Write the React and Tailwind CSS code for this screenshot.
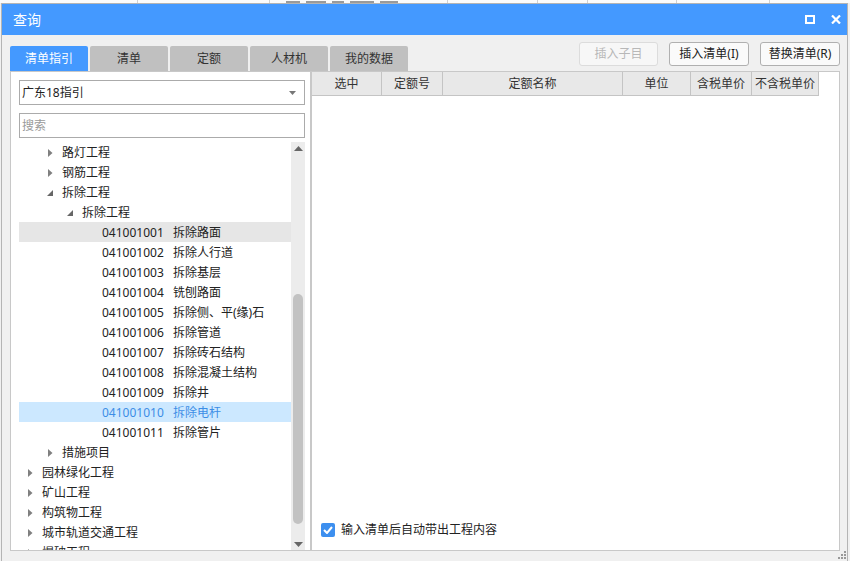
import React from "react";

const font = "font-['Noto_Sans','Noto_Sans_CJK_SC',sans-serif]";

const tabs = ["清单指引", "清单", "定额", "人材机", "我的数据"];

const columns = [
  { label: "选中", w: "w-[70px]" },
  { label: "定额号", w: "w-[61px]" },
  { label: "定额名称", w: "w-[180px]" },
  { label: "单位", w: "w-[68px]" },
  { label: "含税单价", w: "w-[61px]" },
  { label: "不含税单价", w: "w-[67px]" },
];

// level, state: "closed" | "open" | "leaf"
const rows = [
  { level: 1, state: "closed", text: "路灯工程" },
  { level: 1, state: "closed", text: "钢筋工程" },
  { level: 1, state: "open", text: "拆除工程" },
  { level: 2, state: "open", text: "拆除工程" },
  { level: 3, state: "leaf", code: "041001001", text: "拆除路面", hover: true },
  { level: 3, state: "leaf", code: "041001002", text: "拆除人行道" },
  { level: 3, state: "leaf", code: "041001003", text: "拆除基层" },
  { level: 3, state: "leaf", code: "041001004", text: "铣刨路面" },
  { level: 3, state: "leaf", code: "041001005", text: "拆除侧、平(缘)石" },
  { level: 3, state: "leaf", code: "041001006", text: "拆除管道" },
  { level: 3, state: "leaf", code: "041001007", text: "拆除砖石结构" },
  { level: 3, state: "leaf", code: "041001008", text: "拆除混凝土结构" },
  { level: 3, state: "leaf", code: "041001009", text: "拆除井" },
  { level: 3, state: "leaf", code: "041001010", text: "拆除电杆", selected: true },
  { level: 3, state: "leaf", code: "041001011", text: "拆除管片" },
  { level: 1, state: "closed", text: "措施项目" },
  { level: 0, state: "closed", text: "园林绿化工程" },
  { level: 0, state: "closed", text: "矿山工程" },
  { level: 0, state: "closed", text: "构筑物工程" },
  { level: 0, state: "closed", text: "城市轨道交通工程" },
  { level: 0, state: "closed", text: "爆破工程" },
];

const indent = ["pl-[3px]", "pl-[23px]", "pl-[43px]", "pl-[63px]"];

function Arrow({ state }) {
  if (state === "closed")
    return (
      <svg width="5" height="8" viewBox="0 0 5 8" className="ml-[6px]">
        <path d="M0 0 L4.5 4 L0 8 Z" fill="#808080" />
      </svg>
    );
  if (state === "open")
    return (
      <svg width="6" height="6" viewBox="0 0 6 6" className="ml-[5px]">
        <path d="M6 0 L6 6 L0 6 Z" fill="#666" />
      </svg>
    );
  return null;
}

function TreeRow({ row }) {
  const bg = row.selected ? "bg-[#cce8ff]" : row.hover ? "bg-[#e6e6e6]" : "";
  const color = row.selected ? "text-[#3c8de6]" : "text-[#222]";
  return (
    <div className={`flex h-[20px] shrink-0 items-center pt-px ${indent[row.level]} ${bg} ${color}`}>
      <div className="flex w-[20px] items-center">
        <Arrow state={row.state} />
      </div>
      {row.code && <span className="w-[71px]">{row.code}</span>}
      <span>{row.text}</span>
    </div>
  );
}

export default function App() {
  return (
    <div className={`h-[561px] w-[850px] overflow-hidden bg-[#f0f0f0] text-[12px] ${font}`}>
      {/* window behind the dialog */}
      <div className="flex h-[3px] bg-[#fbfbfb]">
        <div className="w-[138px] border-r border-[#d0d0d0]" />
        <div className="w-[132px] border-r border-[#d0d0d0]" />
        <div className="flex w-[178px] items-start gap-[6px] border-r border-[#d0d0d0] pl-[16px] pt-px">
          <div className="h-[2px] w-[14px] bg-[#9a9a9a]" />
          <div className="h-[2px] w-[20px] bg-[#9a9a9a]" />
          <div className="h-[2px] w-[12px] bg-[#9a9a9a]" />
          <div className="h-[2px] w-[24px] bg-[#9a9a9a]" />
          <div className="h-[2px] w-[18px] bg-[#9a9a9a]" />
        </div>
        <div className="w-[90px] border-r border-[#d0d0d0]" />
        <div className="w-[50px] border-r border-[#d0d0d0]" />
        <div className="w-[89px] border-r border-[#d0d0d0]" />
        <div className="w-[93px] border-r border-[#d0d0d0]" />
      </div>

      <div className="ml-px flex h-[558px] w-[847px] flex-col border-x border-t border-[#b4b4b4] bg-[#f0f0f0]">
        {/* title bar */}
        <div className="flex h-[31px] shrink-0 items-center justify-between bg-[#4499ff] pl-[11px] pr-[6px] text-[14px] text-white">
          <span>查询</span>
          <div className="flex items-center gap-[16px]">
            <svg width="10" height="9" viewBox="0 0 10 9">
              <rect x="1" y="1" width="8" height="7" fill="none" stroke="#fff" strokeWidth="2" />
            </svg>
            <svg width="10" height="9" viewBox="0 0 10 9">
              <path d="M1 0.5 L9 8.5 M9 0.5 L1 8.5" stroke="#fff" strokeWidth="2.2" />
            </svg>
          </div>
        </div>

        {/* tabs and buttons */}
        <div className="flex h-[36px] shrink-0 justify-between pl-[8px] pr-[7px]">
          <div className="mt-[11px] flex gap-[2px]">
            {tabs.map((t, i) => (
              <div
                key={t}
                className={`flex h-[25px] w-[78px] items-center justify-center rounded-t-[2px] ${
                  i === 0 ? "bg-[#4499ff] text-white" : "bg-[#c0c0c0] text-[#333]"
                }`}
              >
                {t}
              </div>
            ))}
          </div>
          <div className="mt-[7px] flex gap-[11px]">
            <div className="flex h-[24px] w-[79px] items-center justify-center rounded-[3px] border border-[#dcdcdc] bg-[#f7f7f7] text-[#b8b8b8]">
              插入子目
            </div>
            <div className="flex h-[24px] w-[80px] items-center justify-center rounded-[3px] border border-[#b0b0b0] bg-[#fafafa] text-[#222]">
              插入清单(I)
            </div>
            <div className="flex h-[24px] w-[80px] items-center justify-center rounded-[3px] border border-[#b0b0b0] bg-[#fafafa] text-[#222]">
              替换清单(R)
            </div>
          </div>
        </div>

        {/* panels */}
        <div className="flex h-[480px] shrink-0 pl-[8px] pr-[7px]">
          <div className="flex w-[301px] flex-col border border-[#c8c8c8] bg-white pl-[8px] pr-[5px] pt-[8px]">
            <div className="flex h-[25px] shrink-0 items-center justify-between border border-[#ababab] pl-[2px] pr-[8px] text-[#222]">
              <span>广东18指引</span>
              <svg width="7" height="4" viewBox="0 0 7 4">
                <path d="M0 0 L7 0 L3.5 4 Z" fill="#777" />
              </svg>
            </div>
            <div className="mt-[8px] flex h-[25px] shrink-0 items-center border border-[#ababab] pl-[2px] text-[#9a9a9a]">
              搜索
            </div>
            <div className="mt-[4px] flex min-h-0 flex-1 overflow-hidden">
              <div className="flex min-w-0 flex-1 flex-col overflow-hidden">
                {rows.map((r, i) => (
                  <TreeRow key={i} row={r} />
                ))}
              </div>
              <div className="flex w-[14px] flex-col items-center bg-[#ececec]">
                <svg width="9" height="5" viewBox="0 0 9 5" className="mt-[4px]">
                  <path d="M0 5 L4.5 0 L9 5 Z" fill="#666" />
                </svg>
                <div className="mt-[143px] h-[230px] w-[10px] rounded-full bg-[#c2c2c2]" />
                <div className="flex-1" />
                <svg width="9" height="5" viewBox="0 0 9 5" className="mb-[3px]">
                  <path d="M0 0 L9 0 L4.5 5 Z" fill="#666" />
                </svg>
              </div>
            </div>
          </div>

          <div className="flex w-[529px] flex-col border border-[#c8c8c8] bg-white">
            <div className="flex h-[24px] shrink-0">
              {columns.map((c) => (
                <div
                  key={c.label}
                  className={`flex ${c.w} shrink-0 items-center justify-center border-b border-r border-[#c4c4c4] bg-[#e8e8e8] text-[#333]`}
                >
                  {c.label}
                </div>
              ))}
            </div>
            <div className="flex-1" />
            <div className="flex items-center gap-[6px] pb-[11px] pl-[9px]">
              <div className="flex h-[14px] w-[14px] items-center justify-center rounded-[2px] bg-[#3d8fef]">
                <svg width="10" height="8" viewBox="0 0 10 8">
                  <path d="M1 4 L4 7 L9 1" fill="none" stroke="#fff" strokeWidth="2" />
                </svg>
              </div>
              <span className="text-[#222]">输入清单后自动带出工程内容</span>
            </div>
          </div>
        </div>

        {/* bottom strip with resize grip */}
        <div className="flex flex-1 items-end justify-end pb-[2px] pr-[1px]">
          <svg width="8" height="8" viewBox="0 0 8 8">
            <rect x="6" y="0" width="2" height="2" fill="#999" />
            <rect x="3" y="3" width="2" height="2" fill="#999" />
            <rect x="6" y="3" width="2" height="2" fill="#999" />
            <rect x="0" y="6" width="2" height="2" fill="#999" />
            <rect x="3" y="6" width="2" height="2" fill="#999" />
            <rect x="6" y="6" width="2" height="2" fill="#999" />
          </svg>
        </div>
      </div>
    </div>
  );
}
